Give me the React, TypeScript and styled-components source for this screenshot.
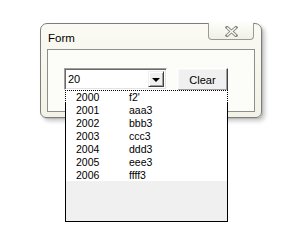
import React from "react";
import styled, { createGlobalStyle } from "styled-components";

const Global = createGlobalStyle`
  html, body { margin: 0; padding: 0; background: #ffffff; }
  body { font-family: "Liberation Sans", Arial, sans-serif; }
`;

const Stage = styled.div`
  width: 285px;
  height: 252px;
  padding: 23px 0 0 40px;
  box-sizing: border-box;
`;

const Window = styled.div`
  width: 222px;
  height: 95px;
  box-sizing: border-box;
  border: 1px solid #7d7d7d;
  border-radius: 7px 7px 6px 6px;
  background: linear-gradient(180deg, #fbfaf3 0%, #f3f2e6 100%);
  box-shadow: 3px 3px 4px rgba(0, 0, 0, 0.22), 1px 1px 1px rgba(0, 0, 0, 0.1);
  display: flex;
  flex-direction: column;
`;

const TitleBar = styled.div`
  height: 25px;
  display: flex;
  justify-content: space-between;
  align-items: flex-start;
  flex-shrink: 0;
`;

const Title = styled.span`
  font-size: 11.5px;
  line-height: 13px;
  color: #000;
  padding: 8px 0 0 7px;
`;

const CloseButton = styled.div`
  width: 46px;
  height: 17px;
  margin: -1px 7px 0 0;
  box-sizing: border-box;
  border: 1px solid #9a9a95;
  border-top: none;
  border-radius: 0 0 4px 4px;
  background: linear-gradient(180deg, #fdfdf9 0%, #f1f0e6 100%);
  display: flex;
  align-items: center;
  justify-content: center;
`;

const ClientArea = styled.div`
  flex: 1;
  margin: 0 6px 5px 6px;
  border: 1px solid #8e8e8a;
  background: #fcfcf8;
  display: flex;
  align-items: flex-start;
  gap: 10px;
  padding: 18px 0 0 16px;
`;

const Combo = styled.div`
  position: relative;
  width: 103px;
  height: 22px;
  box-sizing: border-box;
  border-top: 1px solid #a0a0a0;
  border-left: 1px solid #a0a0a0;
  border-right: 1px solid #ffffff;
  border-bottom: 1px solid #ffffff;
  box-shadow: inset 1px 1px 0 #696969, inset -1px -1px 0 #e3e3e3;
  background: #ffffff;
  display: flex;
  align-items: center;
  padding: 0 2px 0 3px;
`;

const ComboText = styled.span`
  flex: 1;
  font-size: 11px;
  line-height: 13px;
  color: #000;
`;

const DropButton = styled.div`
  width: 16px;
  height: 16px;
  box-sizing: border-box;
  background: #f0f0f0;
  border-top: 1px solid #f0f0f0;
  border-left: 1px solid #f0f0f0;
  border-right: 1px solid #404040;
  border-bottom: 1px solid #404040;
  box-shadow: inset 1px 1px 0 #ffffff, inset -1px -1px 0 #a0a0a0;
  display: flex;
  align-items: center;
  justify-content: center;
`;

const Arrow = styled.div`
  width: 0;
  height: 0;
  border-left: 4px solid transparent;
  border-right: 4px solid transparent;
  border-top: 4px solid #000;
  margin-top: 1px;
`;

const Button = styled.div`
  width: 51px;
  height: 23px;
  box-sizing: border-box;
  background: #f0f0f0;
  border-top: 1px solid #ffffff;
  border-left: 1px solid #ffffff;
  border-right: 1px solid #404040;
  border-bottom: 1px solid #404040;
  box-shadow: inset -1px -1px 0 #a0a0a0, inset 1px 1px 0 #f7f7f7;
  display: flex;
  align-items: center;
  justify-content: center;
  font-size: 11px;
  color: #000;
  padding-top: 1px;
`;

const DropList = styled.div`
  position: absolute;
  top: 100%;
  left: 0;
  margin-top: 1px;
  width: 163px;
  height: 132px;
  box-sizing: border-box;
  border-left: 1px solid #000;
  border-right: 1px solid #000;
  border-bottom: 1px solid #000;
  background: #f0f0f0;
  display: flex;
  flex-direction: column;
  z-index: 2;
`;

const Row = styled.div<{ $focused?: boolean }>`
  height: 13px;
  box-sizing: border-box;
  background: #ffffff;
  display: grid;
  grid-template-columns: 53px 1fr;
  font-size: 10.5px;
  line-height: 12px;
  color: #000;
  padding-left: 10px;
  margin: ${(p) => (p.$focused ? "0 -1px" : "0")};
  border: ${(p) => (p.$focused ? "1px dotted #000" : "none")};
  border-bottom: none;
  padding-top: ${(p) => (p.$focused ? "0" : "1px")};
`;

const rows: [string, string][] = [
  ["2000", "f2'"],
  ["2001", "aaa3"],
  ["2002", "bbb3"],
  ["2003", "ccc3"],
  ["2004", "ddd3"],
  ["2005", "eee3"],
  ["2006", "ffff3"],
];

export default function App() {
  return (
    <>
      <Global />
      <Stage>
        <Window>
          <TitleBar>
            <Title>Form</Title>
            <CloseButton>
              <svg width="13" height="11" viewBox="0 0 13 11">
                <path d="M2 1.5 L11 9.5 M11 1.5 L2 9.5" stroke="#858581" strokeWidth="3.2" strokeLinecap="square" fill="none" />
                <path d="M2 1.5 L11 9.5 M11 1.5 L2 9.5" stroke="#fbfbf7" strokeWidth="1.4" strokeLinecap="butt" fill="none" />
              </svg>
            </CloseButton>
          </TitleBar>
          <ClientArea>
            <Combo>
              <ComboText>20</ComboText>
              <DropButton>
                <Arrow />
              </DropButton>
              <DropList>
                {rows.map(([y, v], i) => (
                  <Row key={y} $focused={i === 0}>
                    <span>{y}</span>
                    <span>{v}</span>
                  </Row>
                ))}
              </DropList>
            </Combo>
            <Button>Clear</Button>
          </ClientArea>
        </Window>
      </Stage>
    </>
  );
}
